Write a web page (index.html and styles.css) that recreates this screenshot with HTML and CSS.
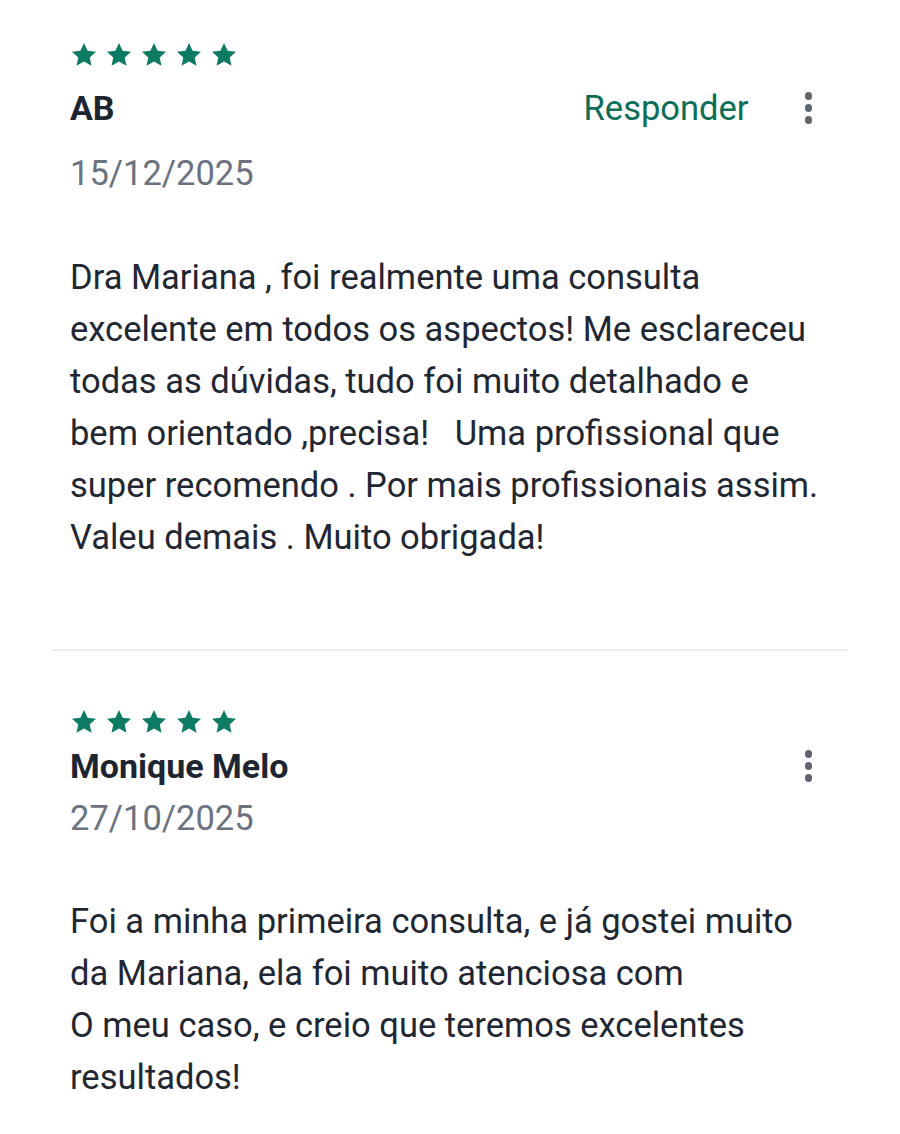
FILE: index.html
```html
<!DOCTYPE html>
<html lang="pt-BR">
<head>
<meta charset="utf-8">
<link rel="stylesheet" href="styles.css">
</head>
<body>
<div class="list">
  <section class="review first">
    <div class="stars">
      <svg viewBox="0 0 24 24"><path d="M12 1.8l3.1 6.6 7.2.8-5.4 4.9 1.5 7.1L12 17.6l-6.4 3.6 1.5-7.1L1.7 9.2l7.2-.8z"/></svg>
      <svg viewBox="0 0 24 24"><path d="M12 1.8l3.1 6.6 7.2.8-5.4 4.9 1.5 7.1L12 17.6l-6.4 3.6 1.5-7.1L1.7 9.2l7.2-.8z"/></svg>
      <svg viewBox="0 0 24 24"><path d="M12 1.8l3.1 6.6 7.2.8-5.4 4.9 1.5 7.1L12 17.6l-6.4 3.6 1.5-7.1L1.7 9.2l7.2-.8z"/></svg>
      <svg viewBox="0 0 24 24"><path d="M12 1.8l3.1 6.6 7.2.8-5.4 4.9 1.5 7.1L12 17.6l-6.4 3.6 1.5-7.1L1.7 9.2l7.2-.8z"/></svg>
      <svg viewBox="0 0 24 24"><path d="M12 1.8l3.1 6.6 7.2.8-5.4 4.9 1.5 7.1L12 17.6l-6.4 3.6 1.5-7.1L1.7 9.2l7.2-.8z"/></svg>
    </div>
    <div class="head">
      <div class="name">AB</div>
      <div class="actions">
        <span class="reply">Responder</span>
        <span class="more"><i></i><i></i><i></i></span>
      </div>
    </div>
    <div class="date">15/12/2025</div>
    <p class="text">Dra Mariana , foi realmente uma consulta<br>excelente em todos os aspectos! Me esclareceu<br>todas as dúvidas, tudo foi muito detalhado e<br>bem orientado ,precisa!&nbsp;&nbsp; Uma profissional que<br>super recomendo . Por mais profissionais assim.<br>Valeu demais . Muito obrigada!</p>
  </section>
  <hr class="divider">
  <section class="review second">
    <div class="stars">
      <svg viewBox="0 0 24 24"><path d="M12 1.8l3.1 6.6 7.2.8-5.4 4.9 1.5 7.1L12 17.6l-6.4 3.6 1.5-7.1L1.7 9.2l7.2-.8z"/></svg>
      <svg viewBox="0 0 24 24"><path d="M12 1.8l3.1 6.6 7.2.8-5.4 4.9 1.5 7.1L12 17.6l-6.4 3.6 1.5-7.1L1.7 9.2l7.2-.8z"/></svg>
      <svg viewBox="0 0 24 24"><path d="M12 1.8l3.1 6.6 7.2.8-5.4 4.9 1.5 7.1L12 17.6l-6.4 3.6 1.5-7.1L1.7 9.2l7.2-.8z"/></svg>
      <svg viewBox="0 0 24 24"><path d="M12 1.8l3.1 6.6 7.2.8-5.4 4.9 1.5 7.1L12 17.6l-6.4 3.6 1.5-7.1L1.7 9.2l7.2-.8z"/></svg>
      <svg viewBox="0 0 24 24"><path d="M12 1.8l3.1 6.6 7.2.8-5.4 4.9 1.5 7.1L12 17.6l-6.4 3.6 1.5-7.1L1.7 9.2l7.2-.8z"/></svg>
    </div>
    <div class="head">
      <div class="name">Monique Melo</div>
      <div class="actions">
        <span class="more"><i></i><i></i><i></i></span>
      </div>
    </div>
    <div class="date">27/10/2025</div>
    <p class="text">Foi a minha primeira consulta, e já gostei muito<br>da Mariana, ela foi muito atenciosa com<br>O meu caso, e creio que teremos excelentes<br>resultados!</p>
  </section>
</div>
</body>
</html>
```

FILE: styles.css
```css
* { box-sizing: border-box; }
html, body {
  margin: 0;
  padding: 0;
  background: #ffffff;
}
body {
  font-family: Roboto, "Noto Sans", Arial, sans-serif;
  color: #1f2733;
}
.list {
  padding: 0 52px;
}
.review {
  padding: 0 18px;
}
.review.first {
  padding-top: 41px;
  padding-bottom: 86px;
}
.review.second {
  padding-top: 57px;
}
.stars {
  display: flex;
  gap: 7px;
  height: 26px;
}
.stars svg {
  width: 28px;
  height: 28px;
  fill: #0d7b63;
}
.head {
  display: flex;
  justify-content: space-between;
  align-items: center;
  margin-top: 19px;
  height: 44px;
}
.second .head {
  margin-top: 10px;
}
.name {
  font-size: 34px;
  font-weight: 700;
  color: #1d2530;
}
.actions {
  display: flex;
  align-items: center;
  gap: 56px;
}
.reply {
  font-size: 34.5px;
  color: #0d6e58;
}
.more {
  display: flex;
  flex-direction: column;
  gap: 4.5px;
  margin-right: 18px;
}
.more i {
  display: block;
  width: 7.5px;
  height: 7.5px;
  border-radius: 50%;
  background: #5d6573;
}
.date {
  font-size: 34.5px;
  color: #6b7280;
  margin-top: 23px;
}
.second .date {
  margin-top: 10px;
}
.text {
  font-size: 34.5px;
  line-height: 52px;
  margin: 58px 0 0;
  color: #1f2733;
  white-space: nowrap;
}
.second .text {
  margin-top: 57px;
}
.divider {
  border: 0;
  border-top: 2px solid #ececec;
  margin: 0;
}
```
